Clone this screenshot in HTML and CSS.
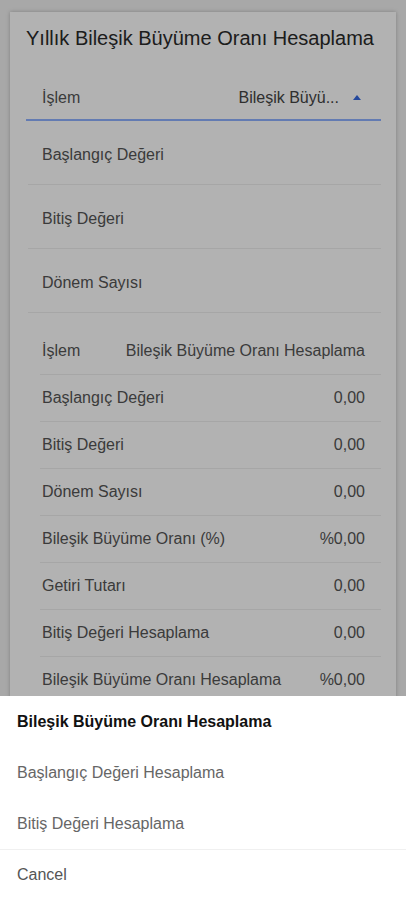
FILE: index.html
```html
<!DOCTYPE html>
<html lang="tr">
<head>
    <meta charset="UTF-8">
    <meta name="viewport" content="width=device-width, initial-scale=1.0">
    <title>Yıllık Bileşik Büyüme Oranı Hesaplama</title>
    <link rel="stylesheet" href="styles.css">
</head>
<body>
    <div class="card">
        <h1 class="card-title">Yıllık Bileşik Büyüme Oranı Hesaplama</h1>

        <div class="select-row">
            <span class="select-label">İşlem</span>
            <span class="select-value">Bileşik Büyü...</span>
            <svg class="select-arrow" width="8" height="5" viewBox="0 0 8 5"><polygon points="0,5 8,5 4,0" /></svg>
        </div>

        <div class="inputs">
            <div class="input-row">Başlangıç Değeri</div>
            <div class="input-row">Bitiş Değeri</div>
            <div class="input-row">Dönem Sayısı</div>
        </div>

        <div class="results">
            <div class="result-row"><span>İşlem</span><span>Bileşik Büyüme Oranı Hesaplama</span></div>
            <div class="result-row"><span>Başlangıç Değeri</span><span>0,00</span></div>
            <div class="result-row"><span>Bitiş Değeri</span><span>0,00</span></div>
            <div class="result-row"><span>Dönem Sayısı</span><span>0,00</span></div>
            <div class="result-row"><span>Bileşik Büyüme Oranı (%)</span><span>%0,00</span></div>
            <div class="result-row"><span>Getiri Tutarı</span><span>0,00</span></div>
            <div class="result-row"><span>Bitiş Değeri Hesaplama</span><span>0,00</span></div>
            <div class="result-row"><span>Bileşik Büyüme Oranı Hesaplama</span><span>%0,00</span></div>
        </div>
    </div>

    <div class="backdrop"></div>

    <div class="sheet">
        <div class="sheet-options">
            <div class="sheet-item selected">Bileşik Büyüme Oranı Hesaplama</div>
            <div class="sheet-item">Başlangıç Değeri Hesaplama</div>
            <div class="sheet-item">Bitiş Değeri Hesaplama</div>
        </div>
        <div class="sheet-item cancel">Cancel</div>
    </div>
</body>
</html>
```

FILE: styles.css
```css
body {
    font-family: "Liberation Sans", Arial, sans-serif;
    background-color: #f1f1f1;
    margin: 0;
    padding: 0;
    font-size: 16px;
    color: #555;
}
.card {
    background-color: #fff;
    margin: 12px 10px 0;
    padding: 14px 15px 20px 16px;
    box-shadow: 0 0 4px rgba(0, 0, 0, 0.25);
}
.card-title {
    margin: 0;
    font-size: 20px;
    font-weight: normal;
    line-height: 24px;
    color: #2a2a2a;
}
.select-row {
    display: flex;
    align-items: center;
    height: 43px;
    margin-top: 26px;
    padding: 0 20px 0 16px;
    border-bottom: 2px solid #8fb0ff;
}
.select-label {
    flex: 1;
}
.select-value {
    margin-right: 14px;
    color: #444;
}
.select-arrow {
    fill: #3468e0;
}
.inputs {
    margin-left: 2px;
}
.input-row {
    padding: 25px 0 20px 14px;
    line-height: 18px;
    border-bottom: 1px solid #eee;
}
.results {
    margin: 15px 0 0 14px;
}
.result-row {
    display: flex;
    justify-content: space-between;
    align-items: center;
    height: 46px;
    padding: 0 16px 0 2px;
    border-bottom: 1px solid #eee;
}
.backdrop {
    position: fixed;
    top: 0;
    left: 0;
    right: 0;
    bottom: 0;
    background-color: rgba(0, 0, 0, 0.3);
}
.sheet {
    position: fixed;
    left: 0;
    right: 0;
    bottom: 0;
    height: 204px;
    background-color: #fff;
}
.sheet-options {
    border-bottom: 1px solid #f0f0f0;
}
.sheet-item {
    height: 51px;
    display: flex;
    align-items: center;
    padding-left: 17px;
    color: #666;
}
.sheet-item.selected {
    font-weight: bold;
    color: #111;
}
.sheet-item.cancel {
    height: 50px;
    color: #555;
}
```
